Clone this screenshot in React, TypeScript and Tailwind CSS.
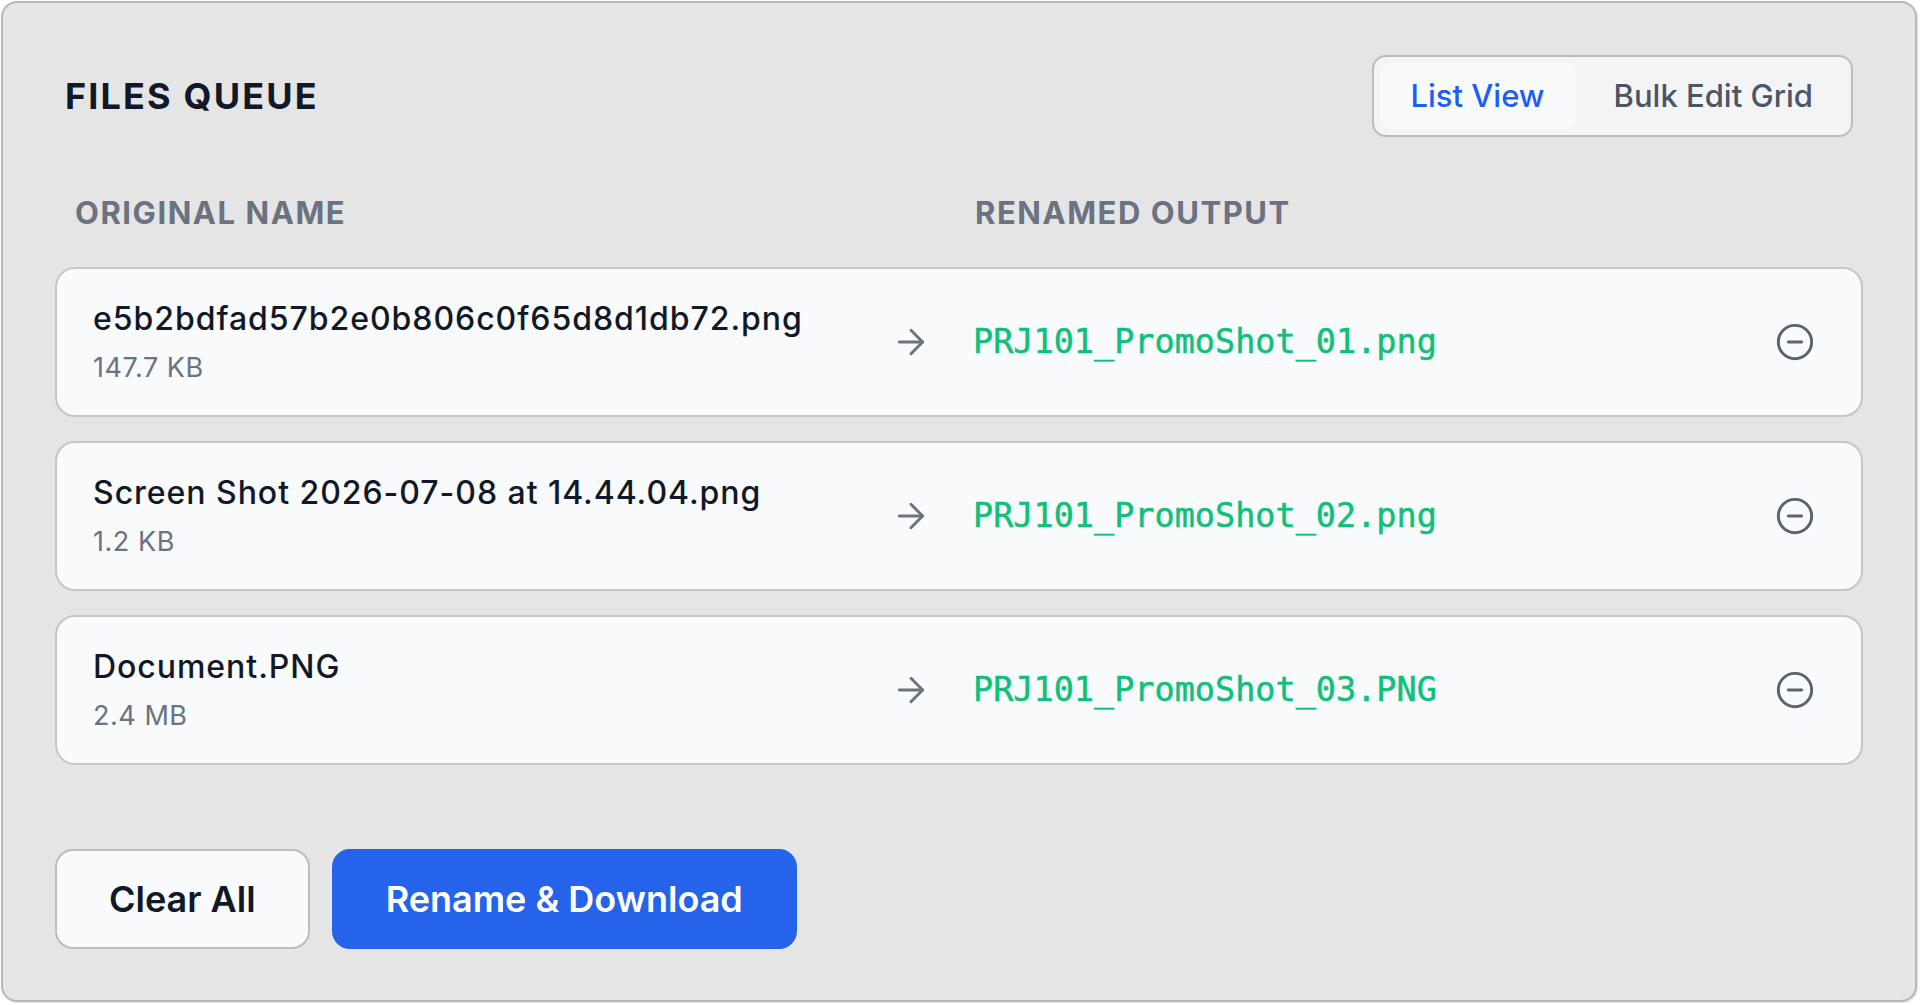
import { ArrowRight, CircleMinus } from "lucide-react";
import { useState } from "react";

type QueuedFile = {
  id: number;
  name: string;
  size: string;
  output: string;
};

const files: QueuedFile[] = [
  { id: 1, name: "e5b2bdfad57b2e0b806c0f65d8d1db72.png", size: "147.7 KB", output: "PRJ101_PromoShot_01.png" },
  { id: 2, name: "Screen Shot 2026-07-08 at 14.44.04.png", size: "1.2 KB", output: "PRJ101_PromoShot_02.png" },
  { id: 3, name: "Document.PNG", size: "2.4 MB", output: "PRJ101_PromoShot_03.PNG" },
];

function FileRow({ file }: { file: QueuedFile }) {
  return (
    <div className="flex items-center h-[150px] rounded-[20px] border-2 border-[#c6c6c6] bg-[#f9fafb] pl-[36px] pr-[46px]">
      <div className="w-[798px] flex flex-col">
        <span className="text-[32px] leading-[36px] font-medium tracking-[0.03em] text-[#111827]">{file.name}</span>
        <span className="mt-[15px] text-[27px] leading-[32px] tracking-[0.02em] text-[#6b7280]">{file.size}</span>
      </div>
      <ArrowRight size={40} strokeWidth={1.75} className="text-[#6b7280] shrink-0" />
      <span className="ml-[42px] flex-1 font-['DejaVu_Sans_Mono',monospace] text-[33.5px] leading-[44px] text-[#10c07a] [-webkit-text-stroke:0.5px_currentColor]">
        {file.output}
      </span>
      <button className="text-[#5b6270]">
        <CircleMinus size={40} strokeWidth={1.75} />
      </button>
    </div>
  );
}

export default function App() {
  const [view, setView] = useState<"list" | "grid">("list");

  return (
    <div className="p-px font-['Inter',sans-serif]">
      <div className="w-[1916px] h-[1001px] rounded-2xl border-2 border-[#b8b8b8] bg-[#e5e5e5] pt-[52px] px-[52px] shadow-[1px_1px_2px_rgba(0,0,0,0.15)]">
        <div className="flex items-center justify-between px-[10px]">
          <h1 className="text-[36px] font-bold tracking-[0.06em] text-[#111827]">FILES QUEUE</h1>
          <div className="flex gap-[6px] rounded-[14px] border-2 border-[#bcbcbc] bg-[#f3f4f6] p-[6px]">
            <button
              onClick={() => setView("list")}
              className={
                view === "list"
                  ? "h-[66px] px-[31px] rounded-[10px] bg-[#f9fafb] text-[31px] font-medium text-[#1d5ef5]"
                  : "h-[66px] px-[31px] rounded-[10px] text-[31px] font-medium text-[#4b5563]"
              }
            >
              List View
            </button>
            <button
              onClick={() => setView("grid")}
              className={
                view === "grid"
                  ? "h-[66px] px-[32px] rounded-[10px] bg-[#f9fafb] text-[31px] font-medium text-[#1d5ef5]"
                  : "h-[66px] px-[32px] rounded-[10px] text-[31px] font-medium text-[#4b5563]"
              }
            >
              Bulk Edit Grid
            </button>
          </div>
        </div>

        <div className="mt-[58px] flex h-[36px] items-center pl-[20px] text-[31px] font-bold tracking-wider text-[#6b7280]">
          <span className="w-[900px]">ORIGINAL NAME</span>
          <span>RENAMED OUTPUT</span>
        </div>

        <div className="mt-[36px] flex flex-col gap-[24px]">
          {files.map((f) => (
            <FileRow key={f.id} file={f} />
          ))}
        </div>

        <div className="mt-[84px] flex gap-[22px]">
          <button className="h-[100px] rounded-[18px] border-2 border-[#bdbdbd] bg-[#f9fafb] px-[52px] text-[36px] font-semibold text-[#111827]">
            Clear All
          </button>
          <button className="h-[100px] rounded-[18px] border-2 border-[#2563eb] bg-[#2563eb] px-[52px] text-[36px] font-semibold text-white">
            Rename &amp; Download
          </button>
        </div>
      </div>
    </div>
  );
}
